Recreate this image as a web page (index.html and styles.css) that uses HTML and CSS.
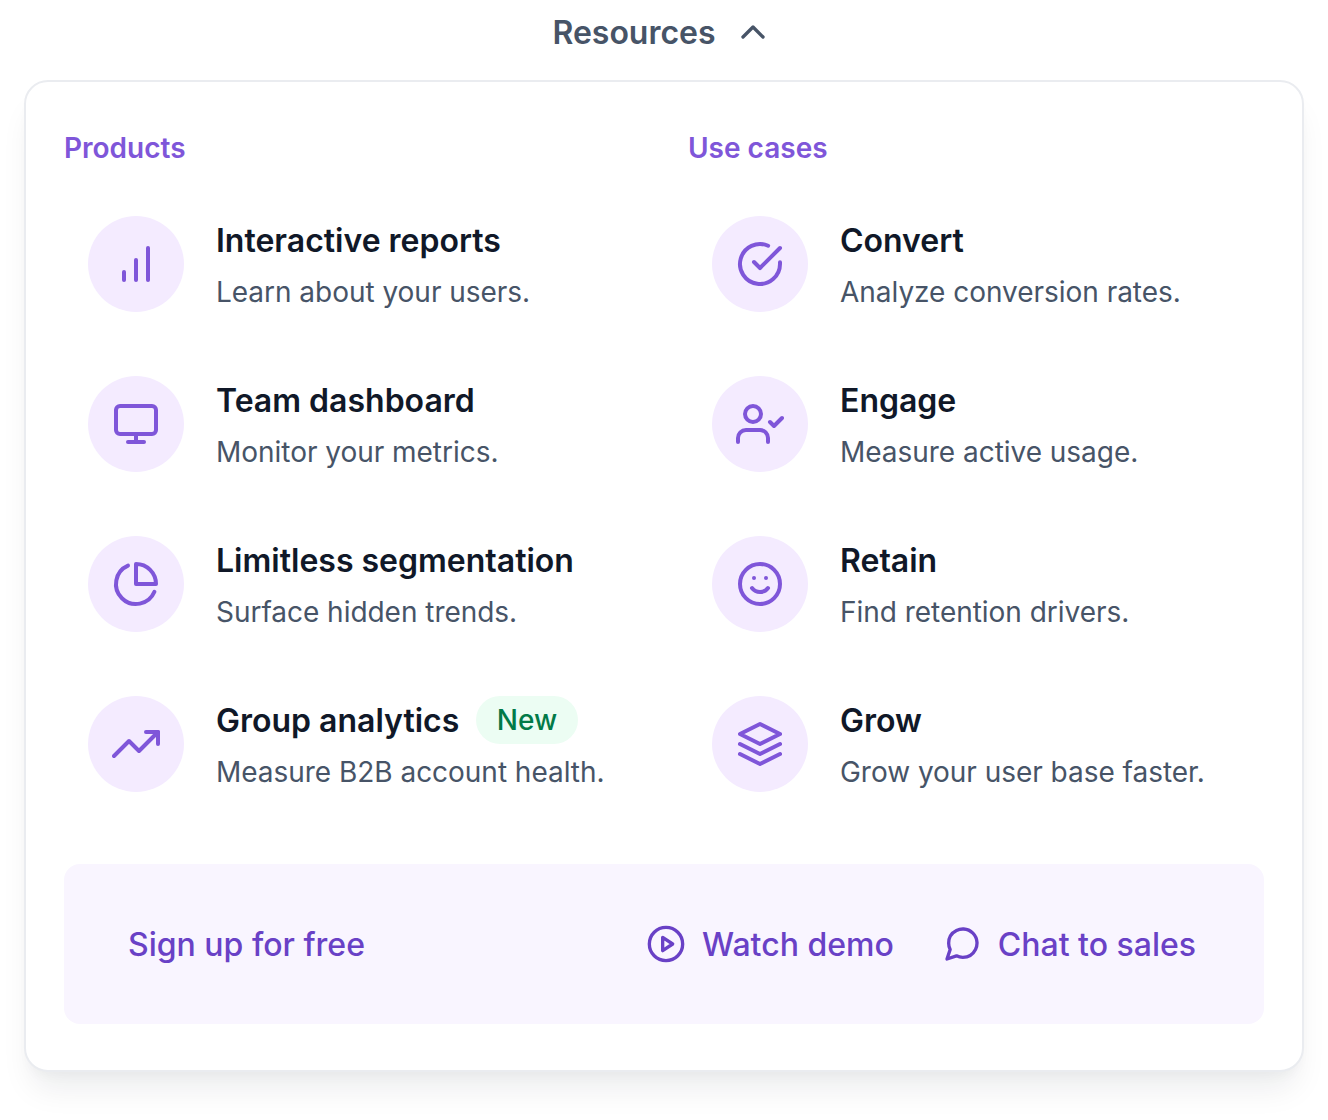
FILE: index.html
```html
<!DOCTYPE html>
<html lang="en">
<head>
    <meta charset="UTF-8">
    <meta name="viewport" content="width=device-width, initial-scale=1.0">
    <title>Resources</title>
    <link rel="stylesheet" href="styles.css">
</head>
<body>

    <button class="trigger">
        <span>Resources</span>
        <svg class="icon-md" viewBox="0 0 24 24"><polyline points="18 15 12 9 6 15"/></svg>
    </button>

    <div class="menu">
        <div class="columns">
            <div class="column">
                <h2>Products</h2>
                <a class="item">
                    <span class="item-icon"><svg viewBox="0 0 24 24"><line x1="18" y1="20" x2="18" y2="4"/><line x1="12" y1="20" x2="12" y2="10"/><line x1="6" y1="20" x2="6" y2="16"/></svg></span>
                    <span class="item-text">
                        <span class="item-title">Interactive reports</span>
                        <span class="item-desc">Learn about your users.</span>
                    </span>
                </a>
                <a class="item">
                    <span class="item-icon"><svg viewBox="0 0 24 24"><rect x="2" y="3" width="20" height="14" rx="2" ry="2"/><line x1="8" y1="21" x2="16" y2="21"/><line x1="12" y1="17" x2="12" y2="21"/></svg></span>
                    <span class="item-text">
                        <span class="item-title">Team dashboard</span>
                        <span class="item-desc">Monitor your metrics.</span>
                    </span>
                </a>
                <a class="item">
                    <span class="item-icon"><svg viewBox="0 0 24 24"><path d="M21.21 15.89A10 10 0 1 1 8 2.83"/><path d="M22 12A10 10 0 0 0 12 2v10z"/></svg></span>
                    <span class="item-text">
                        <span class="item-title">Limitless segmentation</span>
                        <span class="item-desc">Surface hidden trends.</span>
                    </span>
                </a>
                <a class="item">
                    <span class="item-icon"><svg viewBox="0 0 24 24"><polyline points="23 6 13.5 15.5 8.5 10.5 1 18"/><polyline points="17 6 23 6 23 12"/></svg></span>
                    <span class="item-text">
                        <span class="item-title">Group analytics <span class="badge">New</span></span>
                        <span class="item-desc">Measure B2B account health.</span>
                    </span>
                </a>
            </div>
            <div class="column">
                <h2>Use cases</h2>
                <a class="item">
                    <span class="item-icon"><svg viewBox="0 0 24 24"><path d="M22 11.08V12a10 10 0 1 1-5.93-9.14"/><polyline points="22 4 12 14.01 9 11.01"/></svg></span>
                    <span class="item-text">
                        <span class="item-title">Convert</span>
                        <span class="item-desc">Analyze conversion rates.</span>
                    </span>
                </a>
                <a class="item">
                    <span class="item-icon"><svg viewBox="0 0 24 24"><path d="M16 21v-2a4 4 0 0 0-4-4H5a4 4 0 0 0-4 4v2"/><circle cx="8.5" cy="7" r="4"/><polyline points="17 11 19 13 23 9"/></svg></span>
                    <span class="item-text">
                        <span class="item-title">Engage</span>
                        <span class="item-desc">Measure active usage.</span>
                    </span>
                </a>
                <a class="item">
                    <span class="item-icon"><svg viewBox="0 0 24 24"><circle cx="12" cy="12" r="10"/><path d="M8 14s1.5 2 4 2 4-2 4-2"/><line x1="9" y1="9" x2="9.01" y2="9"/><line x1="15" y1="9" x2="15.01" y2="9"/></svg></span>
                    <span class="item-text">
                        <span class="item-title">Retain</span>
                        <span class="item-desc">Find retention drivers.</span>
                    </span>
                </a>
                <a class="item">
                    <span class="item-icon"><svg viewBox="0 0 24 24"><polygon points="12 2 2 7 12 12 22 7 12 2"/><polyline points="2 17 12 22 22 17"/><polyline points="2 12 12 17 22 12"/></svg></span>
                    <span class="item-text">
                        <span class="item-title">Grow</span>
                        <span class="item-desc">Grow your user base faster.</span>
                    </span>
                </a>
            </div>
        </div>

        <div class="footer">
            <a class="footer-link">Sign up for free</a>
            <div class="footer-actions">
                <a class="footer-link">
                    <svg class="icon-md" viewBox="0 0 24 24"><circle cx="12" cy="12" r="10"/><polygon points="10 8 16 12 10 16 10 8"/></svg>
                    Watch demo
                </a>
                <a class="footer-link">
                    <svg class="icon-md" viewBox="0 0 24 24"><path d="M21 11.5a8.38 8.38 0 0 1-.9 3.8 8.5 8.5 0 0 1-7.6 4.7 8.38 8.38 0 0 1-3.8-.9L3 21l1.9-5.7a8.38 8.38 0 0 1-.9-3.8 8.5 8.5 0 0 1 4.7-7.6 8.38 8.38 0 0 1 3.8-.9h.5a8.48 8.48 0 0 1 8 8v.5z"/></svg>
                    Chat to sales
                </a>
            </div>
        </div>
    </div>

</body>
</html>
```

FILE: styles.css
```css
body {
    margin: 0;
    padding-bottom: 48px;
    font-family: Inter, "Liberation Sans", sans-serif;
    background-color: #fff;
}
svg {
    fill: none;
    stroke: currentColor;
    stroke-width: 2;
    stroke-linecap: round;
    stroke-linejoin: round;
    display: block;
    flex: none;
}
.icon-md {
    width: 40px;
    height: 40px;
}
.trigger {
    display: flex;
    align-items: center;
    justify-content: center;
    gap: 17px;
    width: 100%;
    height: 64px;
    margin: 0 0 16px;
    padding: 0 3px 0 0;
    border: none;
    background: none;
    font-family: inherit;
    font-size: 32px;
    font-weight: 600;
    color: #475467;
}
.menu {
    box-sizing: border-box;
    width: 1280px;
    height: 992px;
    margin: 0 24px;
    padding: 46px 38px;
    background: white;
    border: 2px solid #eaecf0;
    border-radius: 24px;
    box-shadow: 0 24px 32px -8px rgba(16, 24, 40, 0.08), 0 8px 12px -4px rgba(16, 24, 40, 0.03);
}
.columns {
    display: grid;
    grid-template-columns: 600px 600px;
    gap: 24px;
}
h2 {
    margin: 0 0 48px;
    font-size: 28px;
    line-height: 40px;
    font-weight: 600;
    color: #7f56d9;
}
.item {
    display: flex;
    gap: 32px;
    padding-left: 24px;
    margin-bottom: 64px;
}
.item:last-child {
    margin-bottom: 0;
}
.item-icon {
    display: flex;
    align-items: center;
    justify-content: center;
    width: 96px;
    height: 96px;
    border-radius: 50%;
    background: #f4ebff;
    color: #7f56d9;
    flex: none;
}
.item-icon svg {
    width: 48px;
    height: 48px;
}
.item-text {
    display: flex;
    flex-direction: column;
    gap: 8px;
}
.item-title {
    display: flex;
    align-items: center;
    gap: 17px;
    height: 48px;
    font-size: 32px;
    font-weight: 600;
    color: #101828;
}
.item-desc {
    font-size: 28px;
    line-height: 40px;
    letter-spacing: -0.03px;
    color: #475467;
}
.badge {
    padding: 0 20.5px;
    line-height: 48px;
    border-radius: 24px;
    background: #ecfdf3;
    color: #027a48;
    font-size: 28px;
    font-weight: 500;
}
.footer {
    display: flex;
    align-items: center;
    justify-content: space-between;
    height: 160px;
    margin-top: 72px;
    padding: 0 68px 0 64px;
    background: #f9f5ff;
    border-radius: 16px;
}
.footer-actions {
    display: flex;
    gap: 48px;
}
.footer-link {
    display: flex;
    align-items: center;
    gap: 16px;
    font-size: 32px;
    font-weight: 500;
    color: #6941c6;
}
```
